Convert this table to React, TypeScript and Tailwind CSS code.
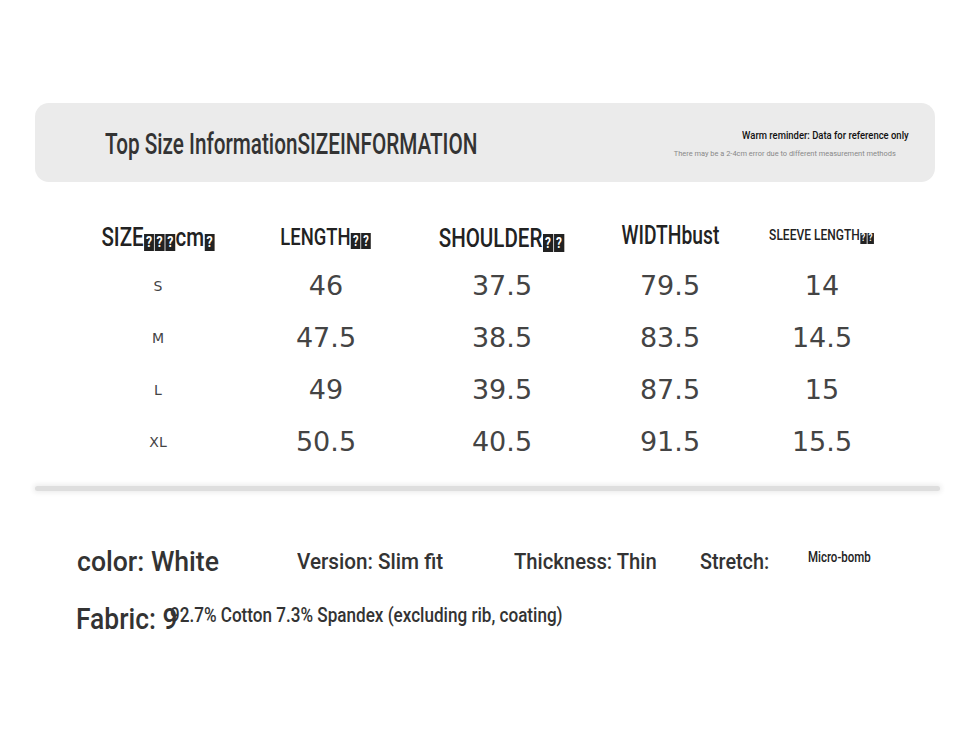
import React from 'react';

const roboto = { fontFamily: 'Roboto, "Liberation Sans", sans-serif' };
const num = { fontFamily: '"DejaVu Sans", Verdana, sans-serif' };

// squeeze a run of text so it reads like the condensed face in the picture
const Squeeze = ({ s, origin = 'origin-left', children }: { s: string; origin?: string; children: React.ReactNode }) => (
  <span className={`inline-block whitespace-nowrap ${origin} ${s}`}>{children}</span>
);

const Q = ({ w, h, t }: { w: string; h: string; t: string }) => (
  <span className={`inline-flex items-center justify-center ${w} ${h} ${t} bg-[#222] text-white leading-none mx-[0.5px] align-[-1px] font-bold`}>?</span>
);

const rows = [
  ['S', '46', '37.5', '79.5', '14'],
  ['M', '47.5', '38.5', '83.5', '14.5'],
  ['L', '49', '39.5', '87.5', '15'],
  ['XL', '50.5', '40.5', '91.5', '15.5'],
];

const cols = ['w-[160px]', 'w-[176px]', 'w-[176px]', 'w-[160px]', 'w-[144px]'];

export default function App() {
  return (
    <div className="w-[972px] h-[729px] bg-white overflow-hidden" style={roboto}>
      <div className="pt-[103px] pl-[35px] pr-[37px]">
        <div className="h-[79px] bg-[#ebebeb] rounded-[14px] flex items-center justify-between pl-[70px] pr-[26px]">
          <div className="text-[30px] text-[#333] font-medium leading-none mt-[3px]">
            <Squeeze s="scale-x-[0.69]">Top Size InformationSIZEINFORMATION</Squeeze>
          </div>
          <div className="flex flex-col items-end pt-[2px]">
            <div className="text-[11px] text-[#111] font-medium leading-none">
              <Squeeze s="scale-x-[0.86]" origin="origin-right">Warm reminder: Data for reference only</Squeeze>
            </div>
            <div className="text-[8px] text-[#888] mt-[9px] mr-[13px] leading-none">
              <Squeeze s="scale-x-[0.93]" origin="origin-right">There may be a 2-4cm error due to different measurement methods</Squeeze>
            </div>
          </div>
        </div>
      </div>

      <div className="pl-[78px] pt-[41px]">
        <div className="flex items-center h-[30px] text-[#222] font-medium">
          <div className={`${cols[0]} text-center text-[25px]`}>
            <Squeeze s="scale-x-[0.82]" origin="origin-center">
              SIZE<Q w="w-[12px]" h="h-[17px]" t="text-[15px]" /><Q w="w-[12px]" h="h-[17px]" t="text-[15px]" /><Q w="w-[12px]" h="h-[17px]" t="text-[15px]" />cm<Q w="w-[12px]" h="h-[17px]" t="text-[15px]" />
            </Squeeze>
          </div>
          <div className={`${cols[1]} text-center text-[23px]`}>
            <Squeeze s="scale-x-[0.8]" origin="origin-center">
              LENGTH<Q w="w-[12px]" h="h-[16px]" t="text-[14px]" /><Q w="w-[12px]" h="h-[16px]" t="text-[14px]" />
            </Squeeze>
          </div>
          <div className={`${cols[2]} text-center text-[26px]`}>
            <Squeeze s="scale-x-[0.79]" origin="origin-center">
              SHOULDER<Q w="w-[13px]" h="h-[18px]" t="text-[15px]" /><Q w="w-[13px]" h="h-[18px]" t="text-[15px]" />
            </Squeeze>
          </div>
          <div className={`${cols[3]} text-center text-[25px] -mt-[4px]`}>
            <Squeeze s="scale-x-[0.77]" origin="origin-center">WIDTHbust</Squeeze>
          </div>
          <div className={`${cols[4]} text-center text-[15px] -mt-[5px]`}>
            <Squeeze s="scale-x-[0.8]" origin="origin-center">
              SLEEVE LENGTH<Q w="w-[8px]" h="h-[11px]" t="text-[10px]" /><Q w="w-[8px]" h="h-[11px]" t="text-[10px]" />
            </Squeeze>
          </div>
        </div>
        <div className="pt-[7px]">
          {rows.map((r) => (
            <div key={r[0]} className="flex items-center h-[52px] text-[#444]" style={num}>
              <div className={`${cols[0]} text-center text-[14px]`}>{r[0]}</div>
              <div className={`${cols[1]} text-center text-[27px]`}>{r[1]}</div>
              <div className={`${cols[2]} text-center text-[27px]`}>{r[2]}</div>
              <div className={`${cols[3]} text-center text-[27px]`}>{r[3]}</div>
              <div className={`${cols[4]} text-center text-[27px]`}>{r[4]}</div>
            </div>
          ))}
        </div>
      </div>

      <div className="pl-[35px] pr-[32px] pt-[18px]">
        <div className="h-[5px] bg-[#dedede] rounded-full shadow-[0_0_5px_2px_#eeeeee]" />
      </div>

      <div className="pl-[77px] pt-[50px] text-[#333] font-medium">
        <div className="flex items-center h-[40px]">
          <div className="w-[220px] text-[28px] mt-[2px]">
            <Squeeze s="scale-x-[0.95]">color: White</Squeeze>
          </div>
          <div className="w-[217px] text-[22px]">
            <Squeeze s="scale-x-[0.94]">Version: Slim fit</Squeeze>
          </div>
          <div className="w-[186px] text-[22px]">
            <Squeeze s="scale-x-[0.92]">Thickness: Thin</Squeeze>
          </div>
          <div className="w-[108px] text-[22px]">
            <Squeeze s="scale-x-[0.9]">Stretch:</Squeeze>
          </div>
          <div className="text-[14px] text-[#222] -mt-[8px]">
            <Squeeze s="scale-x-[0.82]">Micro-bomb</Squeeze>
          </div>
        </div>
        <div className="flex items-center h-[40px] mt-[17px] -ml-[1px]">
          <div className="w-[94px] text-[30px]">
            <Squeeze s="scale-x-[0.88]">Fabric: 9</Squeeze>
          </div>
          <div className="text-[20px] -mt-[6px]">
            <Squeeze s="scale-x-[0.855]">92.7% Cotton 7.3% Spandex (excluding rib, coating)</Squeeze>
          </div>
        </div>
      </div>
    </div>
  );
}
